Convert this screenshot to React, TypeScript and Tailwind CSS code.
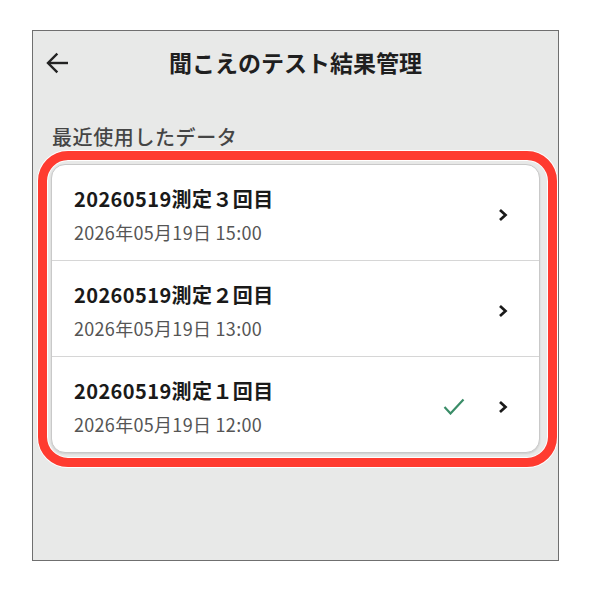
const records = [
  { title: "20260519測定３回目", date: "2026年05月19日 15:00", checked: false },
  { title: "20260519測定２回目", date: "2026年05月19日 13:00", checked: false },
  { title: "20260519測定１回目", date: "2026年05月19日 12:00", checked: true },
];

const font = { fontFamily: '"Noto Sans CJK JP", "Noto Sans", sans-serif' };

const BackArrow = () => (
  <svg width="24" height="22" viewBox="0 0 24 22" fill="none">
    <path d="M23 11H3" stroke="#222" strokeWidth="2.4" />
    <path d="M11.5 2.5L3 11l8.5 8.5" stroke="#222" strokeWidth="2.4" strokeLinecap="square" />
  </svg>
);

const Chevron = () => (
  <svg width="12" height="14" viewBox="0 0 12 14" fill="none">
    <path d="M3 2l5.5 5L3 12" stroke="#1a1a1a" strokeWidth="2.7" />
  </svg>
);

const Check = () => (
  <svg width="22" height="17" viewBox="0 0 22 17" fill="none">
    <path d="M1.5 9l6 6.5L20.5 1.5" stroke="#3a8d68" strokeWidth="2.2" />
  </svg>
);

export default function App() {
  return (
    <div className="w-[590px] h-[590px] bg-white pl-[32px] pt-[30px]" style={font}>
      <div className="relative w-[527px] h-[531px] border border-[#6f6f6f] bg-[#e8e9e8] flex flex-col">
        <header className="relative h-[62px] flex items-center justify-center">
          <button className="absolute left-[12px] top-[21px]">
            <BackArrow />
          </button>
          <h1 className="text-[23px] font-bold text-[#1f1f1f] leading-none">
            聞こえのテスト結果管理
          </h1>
        </header>

        <p className="mt-[30px] ml-[19px] text-[20px] leading-[28px] tracking-[0.6px] font-medium text-[#454545]">
          最近使用したデータ
        </p>

        <div className="mt-[13px] mx-[18px] bg-white border border-[#c9c9c9] rounded-[14px] shadow-[0_1px_2px_rgba(0,0,0,0.12)] overflow-hidden">
          {records.map((r, i) => (
            <div
              key={r.title}
              className={
                "flex items-center pl-[22px] pr-[30px] pt-[20px] pb-[16px] " +
                (i > 0 ? "border-t border-[#d6d6d6]" : "")
              }
            >
              <div className="flex-1 flex flex-col gap-[7px]">
                <span className="text-[20px] leading-[28px] font-bold text-[#1a1a1a] tracking-[0.4px]">
                  {r.title}
                </span>
                <span className="text-[18px] leading-[24px] text-[#555] tracking-[0.3px]">{r.date}</span>
              </div>
              {r.checked && (
                <span className="mr-[32px] flex">
                  <Check />
                </span>
              )}
              <Chevron />
            </div>
          ))}
        </div>

        <div className="absolute left-[5px] top-[120px] w-[519px] h-[316px] rounded-[30px] border-[9px] border-[#ff3b30] shadow-[0_0_0_1px_#fff,inset_0_0_0_1px_#fff] pointer-events-none" />
      </div>
    </div>
  );
}
